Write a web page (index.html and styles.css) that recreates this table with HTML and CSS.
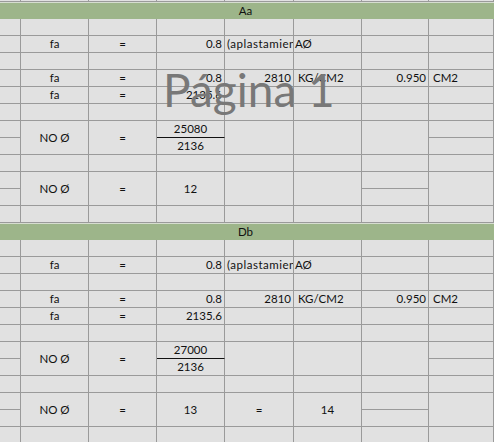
FILE: index.html
```html
<!DOCTYPE html>
<html>
<head>
    <title>Hoja de cálculo</title>
    <link rel="stylesheet" href="styles.css">
</head>
<body>

    <div class="page">
        <div class="sheet">
            <!-- top edge of the row above -->
            <div class="c stub"></div><div class="c stub"></div><div class="c stub"></div><div class="c stub"></div>
            <div class="c stub"></div><div class="c stub"></div><div class="c stub"></div><div class="c stub"></div>

            <!-- section Aa -->
            <div class="band">Aa</div>

            <div class="c"></div><div class="c"></div><div class="c"></div><div class="c"></div>
            <div class="c"></div><div class="c"></div><div class="c"></div><div class="c"></div>

            <div class="c"></div>
            <div class="c ctr">fa</div>
            <div class="c ctr">=</div>
            <div class="c rt">0.8</div>
            <div class="c lt clip">(aplastamiento</div>
            <div class="c lt tight">AØ</div>
            <div class="c"></div>
            <div class="c"></div>

            <div class="c"></div><div class="c"></div><div class="c"></div><div class="c"></div>
            <div class="c"></div><div class="c"></div><div class="c"></div><div class="c"></div>

            <div class="c"></div>
            <div class="c ctr">fa</div>
            <div class="c ctr">=</div>
            <div class="c rt">0.8</div>
            <div class="c rt">2810</div>
            <div class="c lt">KG/CM2</div>
            <div class="c rt">0.950</div>
            <div class="c lt">CM2</div>

            <div class="c"></div>
            <div class="c ctr">fa</div>
            <div class="c ctr">=</div>
            <div class="c rt">2135.6</div>
            <div class="c"></div><div class="c"></div><div class="c"></div><div class="c"></div>

            <div class="c"></div><div class="c"></div><div class="c"></div><div class="c"></div>
            <div class="c"></div><div class="c"></div><div class="c"></div><div class="c"></div>

            <div class="c"></div>
            <div class="c ctr s2">NO Ø</div>
            <div class="c ctr s2">=</div>
            <div class="c ctr frac">25080</div>
            <div class="c s2"></div>
            <div class="c s2"></div>
            <div class="c s2"></div>
            <div class="c"></div>
            <div class="c"></div>
            <div class="c ctr">2136</div>
            <div class="c"></div>

            <div class="c"></div><div class="c"></div><div class="c"></div><div class="c"></div>
            <div class="c"></div><div class="c"></div><div class="c"></div><div class="c"></div>

            <div class="c"></div>
            <div class="c ctr s2">NO Ø</div>
            <div class="c ctr s2">=</div>
            <div class="c ctr s2">12</div>
            <div class="c s2"></div>
            <div class="c s2"></div>
            <div class="c"></div>
            <div class="c s2"></div>
            <div class="c"></div>
            <div class="c"></div>

            <div class="c"></div><div class="c"></div><div class="c"></div><div class="c"></div>
            <div class="c"></div><div class="c"></div><div class="c"></div><div class="c"></div>

            <!-- section Db -->
            <div class="band">Db</div>

            <div class="c"></div><div class="c"></div><div class="c"></div><div class="c"></div>
            <div class="c"></div><div class="c"></div><div class="c"></div><div class="c"></div>

            <div class="c"></div>
            <div class="c ctr">fa</div>
            <div class="c ctr">=</div>
            <div class="c rt">0.8</div>
            <div class="c lt clip">(aplastamiento</div>
            <div class="c lt tight">AØ</div>
            <div class="c"></div>
            <div class="c"></div>

            <div class="c"></div><div class="c"></div><div class="c"></div><div class="c"></div>
            <div class="c"></div><div class="c"></div><div class="c"></div><div class="c"></div>

            <div class="c"></div>
            <div class="c ctr">fa</div>
            <div class="c ctr">=</div>
            <div class="c rt">0.8</div>
            <div class="c rt">2810</div>
            <div class="c lt">KG/CM2</div>
            <div class="c rt">0.950</div>
            <div class="c lt">CM2</div>

            <div class="c"></div>
            <div class="c ctr">fa</div>
            <div class="c ctr">=</div>
            <div class="c rt">2135.6</div>
            <div class="c"></div><div class="c"></div><div class="c"></div><div class="c"></div>

            <div class="c"></div><div class="c"></div><div class="c"></div><div class="c"></div>
            <div class="c"></div><div class="c"></div><div class="c"></div><div class="c"></div>

            <div class="c"></div>
            <div class="c ctr s2">NO Ø</div>
            <div class="c ctr s2">=</div>
            <div class="c ctr frac">27000</div>
            <div class="c s2"></div>
            <div class="c s2"></div>
            <div class="c s2"></div>
            <div class="c"></div>
            <div class="c"></div>
            <div class="c ctr">2136</div>
            <div class="c"></div>

            <div class="c"></div><div class="c"></div><div class="c"></div><div class="c"></div>
            <div class="c"></div><div class="c"></div><div class="c"></div><div class="c"></div>

            <div class="c"></div>
            <div class="c ctr s2">NO Ø</div>
            <div class="c ctr s2">=</div>
            <div class="c ctr s2">13</div>
            <div class="c ctr s2">=</div>
            <div class="c ctr s2">14</div>
            <div class="c"></div>
            <div class="c s2"></div>
            <div class="c"></div>
            <div class="c"></div>

            <div class="c"></div><div class="c"></div><div class="c"></div><div class="c"></div>
            <div class="c"></div><div class="c"></div><div class="c"></div><div class="c"></div>
        </div>

        <div class="watermark">Página 1</div>
    </div>

</body>
</html>
```

FILE: styles.css
```css
body {
    margin: 0;
    background-color: #e1e1e1;
    font-family: Lato, "Open Sans", sans-serif;
    font-size: 11.5px;
    color: #111;
    overflow: hidden;
}

.page {
    position: relative;
    width: 494px;
    height: 442px;
    overflow: hidden;
}

.sheet {
    display: grid;
    grid-template-columns: 21px 68px 68px 68px 69px 68px 67px 1fr;
    grid-template-rows: 2px;
    grid-auto-rows: 17px;
}

.c {
    box-sizing: border-box;
    border-right: 1px solid #9a9a9a;
    border-bottom: 1px solid #9a9a9a;
    display: flex;
    align-items: center;
    white-space: nowrap;
    overflow: hidden;
    line-height: 1;
}

.stub {
    height: 2px;
}

.s2 {
    grid-row: span 2;
}

.ctr {
    justify-content: center;
}

.rt {
    justify-content: flex-end;
    padding-right: 2px;
}

.lt {
    padding-left: 4px;
}

.tight {
    padding-left: 1px;
}

.clip {
    padding-left: 2px;
    letter-spacing: 0.5px;
}

.frac {
    border-bottom-color: #111;
}

.band {
    grid-column: 1 / -1;
    box-sizing: border-box;
    border-top: 1px solid #d6ddd0;
    background-color: #9db58a;
    display: flex;
    align-items: center;
    justify-content: center;
    padding-right: 3px;
    line-height: 1;
}

/* page-break preview label drawn over the grid */
.watermark {
    position: absolute;
    left: 163px;
    top: 67px;
    font-size: 46px;
    line-height: 1;
    color: #787878;
    white-space: nowrap;
}
```
